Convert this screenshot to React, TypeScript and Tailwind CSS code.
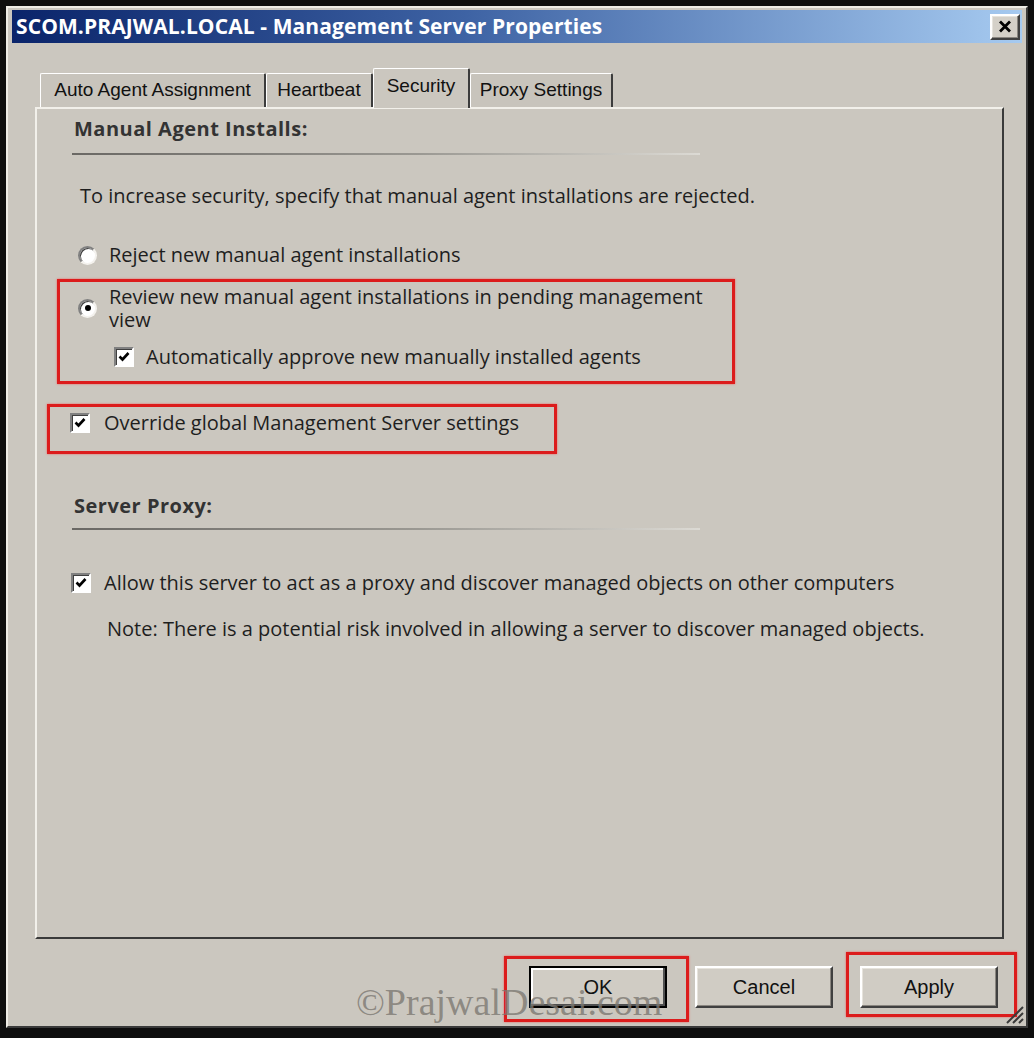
import React from "react";

const body = "font-['Open_Sans',sans-serif]";
const ui = "font-['Liberation_Sans',Arial,sans-serif]";

const raised =
  "border-2 border-t-white border-l-white border-b-[#404040] border-r-[#404040] shadow-[inset_-1px_-1px_#8a8680,inset_1px_1px_#e6e3dc]";

const CheckBox = () => (
  <div className="w-[20px] h-[20px] shrink-0 bg-white border-2 border-t-[#808080] border-l-[#808080] border-b-white border-r-white shadow-[inset_1px_1px_#404040] flex items-center justify-center">
    <svg width="14" height="14" viewBox="0 0 14 14">
      <path d="M2.5 6.5 L5.5 9.5 L11.5 3" fill="none" stroke="#000" strokeWidth="2.6" />
    </svg>
  </div>
);

const Radio = ({ on }: { on?: boolean }) => (
  <div className="w-[19px] h-[19px] shrink-0 rounded-full bg-white border-2 border-t-[#808080] border-l-[#808080] border-b-[#f4f2ee] border-r-[#f4f2ee] shadow-[inset_1px_1px_#404040] flex items-center justify-center">
    {on && <div className="w-[6px] h-[6px] rounded-full bg-black" />}
  </div>
);

const Divider = () => (
  <div className="ml-[35px] w-[628px] h-[2px] bg-[linear-gradient(to_right,#6a6864,#9a9892_55%,#dcdad4)]" />
);

const tabs = [
  { label: "Auto Agent Assignment", w: "w-[226px]" },
  { label: "Heartbeat", w: "w-[107px]" },
  { label: "Security", w: "w-[97px]", active: true },
  { label: "Proxy Settings", w: "w-[143px]" },
];

const Btn = ({ label, def }: { label: string; def?: boolean }) => (
  <div
    className={`h-[42px] flex items-center justify-center text-[20px] text-[#111] bg-[#d0ccc4] ${ui} ${
      def
        ? "w-[138px] border-2 border-black shadow-[inset_-2px_-2px_#505050,inset_2px_2px_#fff]"
        : `w-[138px] ${raised}`
    }`}
  >
    {label}
  </div>
);

export default function App() {
  return (
    <div className="w-[1034px] h-[1038px] bg-[#0e0e0e] pt-[6px] pl-[6px]">
      <div className="relative w-[1022px] h-[1022px] bg-[#cbc7bf] border-2 border-t-[#eeece6] border-l-[#eeece6] border-b-[#3a3a3a] border-r-[#3a3a3a] pt-[2px] px-[4px] flex flex-col">
        {/* title bar */}
        <div className="h-[33px] flex items-center justify-between bg-[linear-gradient(to_right,#0a246a,#3e63a4_45%,#a6caf0)]">
          <span className={`pl-[4px] text-white font-bold text-[21px] leading-none tracking-[0.1px] ${body}`}>
            SCOM.PRAJWAL.LOCAL - Management Server Properties
          </span>
          <div className={`mr-[2px] w-[30px] h-[26px] bg-[#d4d0c8] flex items-center justify-center ${raised}`}>
            <svg width="14" height="13" viewBox="0 0 14 13">
              <path d="M2 1.5 L12 11.5 M12 1.5 L2 11.5" stroke="#000" strokeWidth="2.8" />
            </svg>
          </div>
        </div>

        {/* tabs */}
        <div className="mt-[25px] ml-[28px] h-[39px] flex items-end">
          {tabs.map((t) => (
            <div
              key={t.label}
              className={`${t.w} flex items-center justify-center text-[19px] text-[#111] ${ui} border-t border-l border-t-white border-l-white border-r-2 border-r-[#3c3c3c] rounded-t-[2px] ${
                t.active
                  ? "h-[40px] -mb-[1px] relative z-10 bg-[#cbc7bf] pb-[4px]"
                  : "h-[34px] bg-[#c8c4bc]"
              }`}
            >
              {t.label}
            </div>
          ))}
        </div>

        {/* panel */}
        <div className="ml-[23px] w-[969px] h-[832px] border-2 border-t-[#f2f0ea] border-l-[#f2f0ea] border-b-[#3a3a3a] border-r-[#3a3a3a] flex flex-col text-[#1e1e1e] text-[20px] leading-[24px]">
          <div className={`mt-[8px] ml-[37px] font-bold text-[#333] text-[20px] tracking-[0.5px] ${body}`}>Manual Agent Installs:</div>
          <div className="mt-[12px]">
            <Divider />
          </div>
          <div className={`mt-[29px] ml-[43px] ${body}`}>
            To increase security, specify that manual agent installations are rejected.
          </div>
          <div className="mt-[35px] ml-[41px] flex items-center gap-[12px]">
            <Radio />
            <span className={body}>Reject new manual agent installations</span>
          </div>

          <div className="mt-[12px] ml-[20px] w-[678px] h-[105px] border-[3px] border-[#dc1c1c] shadow-[0_0_2px_#f06060] pt-[3px]">
            <div className="ml-[18px] flex items-center gap-[12px]">
              <Radio on />
              <div className={`leading-[23px] ${body}`}>
                <div>Review new manual agent installations in pending management</div>
                <div>view</div>
              </div>
            </div>
            <div className="mt-[14px] ml-[54px] flex items-center gap-[12px]">
              <CheckBox />
              <span className={body}>Automatically approve new manually installed agents</span>
            </div>
          </div>

          <div className="mt-[20px] ml-[10px] w-[510px] h-[50px] border-[3px] border-[#dc1c1c] shadow-[0_0_2px_#f06060] pt-[6px] pl-[20px] flex items-start gap-[14px]">
            <CheckBox />
            <span className={`-mt-[2px] ${body}`}>Override global Management Server settings</span>
          </div>

          <div className={`mt-[40px] ml-[37px] font-bold text-[#333] text-[20px] tracking-[0.5px] ${body}`}>Server Proxy:</div>
          <div className="mt-[10px]">
            <Divider />
          </div>
          <div className="mt-[41px] ml-[34px] flex items-center gap-[13px]">
            <CheckBox />
            <span className={body}>Allow this server to act as a proxy and discover managed objects on other computers</span>
          </div>
          <div className={`mt-[22px] ml-[70px] ${body}`}>
            Note: There is a potential risk involved in allowing a server to discover managed objects.
          </div>
        </div>

        {/* buttons */}
        <div className="mt-[13px] flex items-start justify-end pr-[5px]">
          <div className="mt-[4px] w-[185px] h-[66px] border-[3px] border-[#dc1c1c] shadow-[0_0_2px_#f06060] pt-[7px] pl-[22px]">
            <Btn label="OK" def />
          </div>
          <div className="mt-[14px] ml-[6px]">
            <Btn label="Cancel" />
          </div>
          <div className="ml-[13px] w-[171px] h-[65px] border-[3px] border-[#dc1c1c] shadow-[0_0_2px_#f06060] pt-[11px] pl-[11px]">
            <Btn label="Apply" />
          </div>
        </div>

        {/* watermark */}
        <div className="absolute left-[348px] top-[975px] z-10 pointer-events-none text-[38px] leading-none text-[#7c7872]/80 font-['Liberation_Serif',serif]">
          ©PrajwalDesai.com
        </div>

        {/* resize grip */}
        <svg className="absolute right-[2px] bottom-[2px]" width="22" height="22" viewBox="0 0 22 22">
          <path d="M21 5 L5 21 M21 11 L11 21 M21 17 L17 21" stroke="#3a3a3a" strokeWidth="2" />
        </svg>
      </div>
    </div>
  );
}
